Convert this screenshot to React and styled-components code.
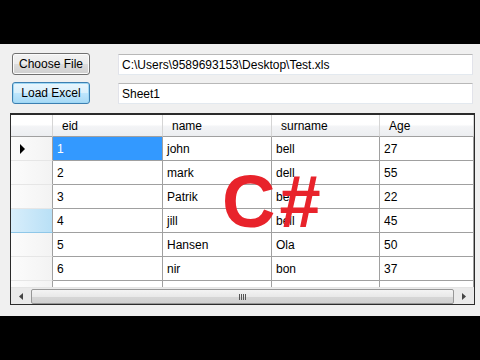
import React from 'react';
import styled, { createGlobalStyle } from 'styled-components';

const GlobalStyle = createGlobalStyle`
  html, body {
    margin: 0;
    padding: 0;
    background: #000;
  }
  body {
    font-family: "Liberation Sans", Arial, sans-serif;
    font-size: 12px;
    color: #000;
  }
`;

const Page = styled.div`
  width: 480px;
  height: 360px;
  display: flex;
  flex-direction: column;
  background: #000;
  overflow: hidden;
`;

const Letterbox = styled.div`
  height: ${p => p.h}px;
  background: #000;
  flex-shrink: 0;
`;

const Window = styled.div`
  flex: 1;
  background: #f0f0f0;
  padding: 9px 5px 0 10px;
  display: flex;
  flex-direction: column;
`;

const FormRow = styled.div`
  display: flex;
  align-items: center;
  gap: 28px;
  padding-left: 2px;
  height: 22px;
  margin-bottom: ${p => p.mb}px;
`;

const Button = styled.button`
  width: 78px;
  height: 22px;
  padding: 0;
  font-family: "Liberation Sans", Arial, sans-serif;
  font-size: 12px;
  color: #000;
  border-radius: 3px;
  border: 1px solid ${p => (p.focused ? '#3c7fb1' : '#707070')};
  background: ${p =>
    p.focused
      ? 'linear-gradient(#eaf6fd 0%, #d9f0fc 50%, #bee6fd 51%, #a7d9f5 100%)'
      : 'linear-gradient(#f2f2f2 0%, #ebebeb 50%, #dddddd 51%, #cfcfcf 100%)'};
  box-shadow: inset 0 0 0 1px ${p => (p.focused ? '#9fd8f5' : '#fbfbfb')};
`;

const TextBox = styled.div`
  width: 355px;
  height: 21px;
  box-sizing: border-box;
  background: #fff;
  border: 1px solid #abadb3;
  border-top-color: #b8b8b8;
  border-left-color: #e2e3ea;
  border-right-color: #e2e3ea;
  border-bottom-color: #e3e9ef;
  padding: 3px 3px 0 3px;
  line-height: 14px;
  white-space: nowrap;
`;

const GridBox = styled.div`
  position: relative;
  width: 465px;
  height: 192px;
  margin-top: 1px;
  box-sizing: border-box;
  border: 1px solid #2b2b2b;
  border-top-width: 2px;
  background: #ababab;
  display: flex;
  flex-direction: column;
  overflow: hidden;
`;

const cols = '42px 110px 109px 108px 1fr';

const HeaderRow = styled.div`
  display: grid;
  grid-template-columns: ${cols};
  height: 22px;
  flex-shrink: 0;
`;

const HeaderCell = styled.div`
  background: linear-gradient(#ffffff 0%, #ffffff 45%, #f3f4f6 55%, #eceef1 100%);
  border-right: 1px solid #d5d5d5;
  border-bottom: 1px solid #a0a0a0;
  padding: 4px 0 0 9px;
  line-height: 14px;
`;

const Body = styled.div`
  height: 150px;
  overflow: hidden;
  background: #fff;
  flex-shrink: 0;
`;

const Row = styled.div`
  display: grid;
  grid-template-columns: ${cols};
  height: 24px;
`;

const RowHeader = styled.div`
  position: relative;
  background: ${p =>
    p.hot ? 'linear-gradient(90deg, #d8eefb, #b9e0f6)' : 'linear-gradient(90deg, #fcfcfc, #f3f3f3)'};
  border-right: 1px solid #a0a0a0;
  border-bottom: 1px solid ${p => (p.hot ? '#8fc7e8' : '#e6e6e6')};
  box-sizing: border-box;
`;

const Arrow = styled.span`
  position: absolute;
  left: 9px;
  top: 7px;
  width: 0;
  height: 0;
  border-top: 5px solid transparent;
  border-bottom: 5px solid transparent;
  border-left: 5px solid #000;
`;

const Cell = styled.div`
  border-right: 1px solid #a0a0a0;
  border-bottom: 1px solid #a0a0a0;
  box-sizing: border-box;
  padding: 5px 0 0 4px;
  line-height: 14px;
  white-space: nowrap;
  background: ${p => (p.selected ? '#3399ff' : '#fff')};
  color: ${p => (p.selected ? '#fff' : '#000')};
`;

const HScroll = styled.div`
  height: 17px;
  display: flex;
  background: #eaeaea;
  border-top: 1px solid #e4e4e4;
  flex-shrink: 0;
`;

const ScrollBtn = styled.div`
  width: 20px;
  display: flex;
  align-items: center;
  justify-content: center;
  flex-shrink: 0;
`;

const Thumb = styled.div`
  flex: 1;
  margin: 1px 0;
  border: 1px solid #979797;
  border-radius: 2px;
  background: linear-gradient(#f3f3f3 0%, #e9e9e9 50%, #d6d6d6 51%, #d0d0d0 100%);
  display: flex;
  align-items: center;
  justify-content: center;
`;

const Grip = styled.span`
  width: 7px;
  height: 6px;
  background: repeating-linear-gradient(90deg, #555 0 1px, transparent 1px 2px);
`;

const Logo = styled.div`
  position: absolute;
  left: 211px;
  top: 50px;
  font-family: "Liberation Sans", Arial, sans-serif;
  font-weight: bold;
  font-size: 74px;
  line-height: 1;
  color: #e8232b;
  letter-spacing: 4px;
  pointer-events: none;
`;

const rows = [
  ['1', 'john', 'bell', '27'],
  ['2', 'mark', 'dell', '55'],
  ['3', 'Patrik', 'bell', '22'],
  ['4', 'jill', 'bell', '45'],
  ['5', 'Hansen', 'Ola', '50'],
  ['6', 'nir', 'bon', '37'],
  ['', '', '', ''],
];

export default function App() {
  return (
    <Page>
      <GlobalStyle />
      <Letterbox h={44} />
      <Window>
        <FormRow mb={7}>
          <Button>Choose File</Button>
          <TextBox>C:\Users\9589693153\Desktop\Test.xls</TextBox>
        </FormRow>
        <FormRow mb={8}>
          <Button focused>Load Excel</Button>
          <TextBox>Sheet1</TextBox>
        </FormRow>
        <GridBox>
          <HeaderRow>
            <HeaderCell />
            <HeaderCell>eid</HeaderCell>
            <HeaderCell>name</HeaderCell>
            <HeaderCell>surname</HeaderCell>
            <HeaderCell>Age</HeaderCell>
          </HeaderRow>
          <Body>
            {rows.map((r, i) => (
              <Row key={i}>
                <RowHeader hot={i === 3}>{i === 0 && <Arrow />}</RowHeader>
                {r.map((v, j) => (
                  <Cell key={j} selected={i === 0 && j === 0}>{v}</Cell>
                ))}
              </Row>
            ))}
          </Body>
          <HScroll>
            <ScrollBtn>
              <svg width="4" height="7" viewBox="0 0 4 7">
                <path d="M4 0 L0 3.5 L4 7 Z" fill="#444" />
              </svg>
            </ScrollBtn>
            <Thumb>
              <Grip />
            </Thumb>
            <ScrollBtn>
              <svg width="4" height="7" viewBox="0 0 4 7">
                <path d="M0 0 L4 3.5 L0 7 Z" fill="#444" />
              </svg>
            </ScrollBtn>
          </HScroll>
          <Logo>C#</Logo>
        </GridBox>
      </Window>
      <Letterbox h={44} />
    </Page>
  );
}
